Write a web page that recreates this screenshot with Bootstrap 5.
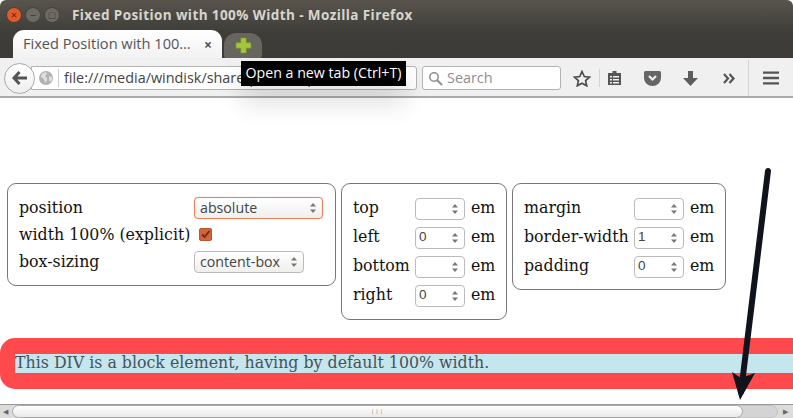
<!DOCTYPE html>
<html lang="en">
<head>
<meta charset="utf-8">
<title>Fixed Position with 100% Width</title>
<link href="https://cdn.jsdelivr.net/npm/bootstrap@5.3.0/dist/css/bootstrap.min.css" rel="stylesheet">
<style>
html,body{margin:0;width:793px;height:418px;overflow:hidden;background:#fff}
.shell{width:793px;height:418px;position:relative;overflow:hidden;font-family:"Open Sans","Noto Sans",sans-serif}
.titlebar{height:58px;background:linear-gradient(#59554d,#3e3d39 55%,#3c3b37);border-radius:6px 6px 0 0}
.winbar{height:30px;padding-left:6px;gap:3px}
.winbtn{width:16px;height:16px;border-radius:50%;background:#6d6a63;border:1px solid #44423d;color:#37352f;font-size:11px;line-height:13px;text-align:center}
.winbtn.closer{background:#e2592b;color:#5a2410}
.wintitle{color:#d8d5cd;font-size:13.5px;font-weight:700;margin-left:9px;white-space:nowrap;letter-spacing:.41px}
.tabrow{height:28px;padding-left:13px;align-items:flex-end}
.tabon{width:209px;height:28px;background:linear-gradient(#fff,#f2f2f2);border-radius:11px 11px 0 0;padding:0 10px;color:#555;font-size:14.6px;white-space:nowrap}
.tabx{color:#555;font-size:14px;font-weight:700;margin-left:auto;margin-right:0}
.tabnew{width:38px;height:25px;margin-left:2px;background:#66665f;border-radius:12px 12px 2px 2px}
.toolbar{height:40px;background:#f0f0f0;border-bottom:2px solid #aaa;padding:2px 0 0 4px;position:relative}
.backbtn{width:31px;height:31px;border-radius:50%;background:linear-gradient(#fff,#eee);border:1px solid #a9a9a9;position:relative;z-index:1;flex:none}
.urlbar{width:386px;height:24px;margin-left:-4px;background:#fff;border:1px solid #b3b3b3;border-radius:0 3px 3px 0;padding-left:7px;font-size:14.4px;color:#444;white-space:nowrap;overflow:hidden;flex:none}
.urlbar svg{flex:none}
.urlsep{width:1px;height:18px;background:#ccc;margin:0 5px 0 5px;flex:none}
.searchbar{width:139px;height:24px;margin-left:5px;background:#fff;border:1px solid #b3b3b3;border-radius:3px;padding-left:5px;color:#8e8e8e;font-size:14.4px;flex:none}
.toolicons{margin-left:12px;height:38px}
.iconslot{flex:none}
.tsep{width:1px;background:#d4d4d4;flex:none}
.sepone{height:18px;margin:0 7px 0 8px}
.septwo{height:36px;margin-left:12px}
.mpocket{margin-left:22px}
.mdown{margin-left:22px}
.mmore{margin-left:25px}
.mburger{margin-left:14px}
.pagebody{height:306px;background:#fff;font-family:"DejaVu Serif","Liberation Serif",serif;font-size:15.8px;color:#111}
.panels{padding:85px 0 0 7px;gap:5px;height:240px;align-items:flex-start}
.boxa{border:1px solid #777;border-radius:9px;background:#fff;padding:10px 11px 0 11px}
.boxone{width:329px;height:103px;padding-top:11px}
.boxtwo{width:166px;height:137px}
.boxthree{width:214px;height:107px}
.boxtwo .flabel,.boxtwo .unitlbl,.boxthree .flabel,.boxthree .unitlbl{padding-bottom:2px}
.frow{height:29px;white-space:nowrap}
.frow.lead-row{height:26px}
.frow.tight{height:27px}
.flabel{flex:none}
.wtwo{width:62px}.wthree{width:110px}.wone{width:175px}
.fakesel{height:22px;border:1px solid #bbb;border-radius:4px;background:linear-gradient(#fff,#f0efee);font-family:"Open Sans","Noto Sans",sans-serif;font-size:14.2px;color:#444;padding:0 5px}
.fakesel.hot{width:129px;border-color:#e8805a;box-shadow:0 0 1px #f0a080}
.fakesel.plain{width:110px}
.spin{margin-left:auto;width:8px;height:14px;flex:none}
.spin path{fill:#777}
.numbox{width:50px;height:22px;border:1px solid #bbb;border-radius:4px;background:#fff;font-family:"Liberation Sans",sans-serif;font-size:13.5px;color:#444;padding:0 5px 0 3px;flex:none}
.unitlbl{margin-left:6px}
.checkit{width:13px;height:13px;background:#d0643c;border:1px solid #b9542f;border-radius:2px;margin-left:9px;flex:none}
.redband{height:51px;background:#ff4a4d;border-radius:15px 0 0 15px;padding:16px 0 0 15px;width:793px}
.blueband{height:19px;background:#c5e6ec;color:#45525a;line-height:18px;white-space:nowrap}
.hscroll{position:absolute;left:0;right:0;top:404px;height:14px;background:#dcdcdc;border-top:1px solid #999}
.hthumb{position:absolute;left:12px;top:0;width:731px;height:13px;background:linear-gradient(#fff,#e9e9e9);border:1px solid #aaa;border-radius:7px}
.hgrip{font-size:6px;color:#888;line-height:10px;text-align:center;letter-spacing:1px}
.htrack{position:absolute;left:733px;top:0;width:45px;height:13px;border:1px solid #c4c4c4;border-left:0;border-radius:0 7px 7px 0;background:#d4d4d4}
.harrow{position:absolute;top:2px;color:#666;font-size:7px;line-height:9px}
.tipbox{position:absolute;left:241px;top:61px;width:165px;height:25px;background:#000;color:#fff;font-size:14.2px;line-height:24px;text-align:center;white-space:nowrap;z-index:5;box-shadow:0 16px 26px rgba(0,0,0,.14)}
.bigarrow{position:absolute;left:0;top:0;z-index:6;pointer-events:none}
</style>
</head>
<body>
<div class="shell">
  <div class="titlebar">
    <div class="winbar d-flex align-items-center">
      <span class="winbtn closer">×</span><span class="winbtn">−</span><span class="winbtn">□</span>
      <span class="wintitle">Fixed Position with 100% Width - Mozilla Firefox</span>
    </div>
    <div class="tabrow d-flex">
      <div class="tabon d-flex align-items-center"><span>Fixed Position with 100…</span><span class="tabx">×</span></div>
      <div class="tabnew d-flex align-items-center justify-content-center">
        <svg width="17" height="17" viewBox="0 0 16 16"><path d="M5.500 1h5v4.500H15v5h-4.500V15h-5v-4.500H1v-5h4.500z" fill="#a5c63b" stroke="#7e9a2a" stroke-width=".6"/></svg>
      </div>
    </div>
  </div>
  <div class="toolbar d-flex align-items-center">
    <div class="backbtn d-flex align-items-center justify-content-center">
      <svg width="16" height="14" viewBox="0 0 16 14"><path d="M7.500 1 2 7l5.500 6M2.500 7H15" fill="none" stroke="#555" stroke-width="3"/></svg>
    </div>
    <div class="urlbar d-flex align-items-center">
      <svg width="14" height="14" viewBox="0 0 14 14"><circle cx="7" cy="7" r="7" fill="#b2b2b2"/><path d="M3 2.500 7 1l1 2-2 2 2 2v3l-2 2-1-4-3-2zM10 5l3 1v3l-2 2-1-2z" fill="#dedede"/></svg>
      <span class="urlsep"></span>
      <span>file:///media/windisk/share/pub/css/position.html</span>
    </div>
    <div class="searchbar d-flex align-items-center gap-1">
      <svg width="15" height="15" viewBox="0 0 15 15"><circle cx="6" cy="6" r="4.200" fill="none" stroke="#8e8e8e" stroke-width="1.600"/><path d="m9 9 5 5" stroke="#8e8e8e" stroke-width="2"/></svg>
      <span>Search</span>
    </div>
    <div class="toolicons d-flex align-items-center">
      <svg class="iconslot" width="18" height="17" viewBox="0 0 18 17"><path d="m9 1.500 2.300 5 5.200.6-3.900 3.500 1.100 5.200L9 13.200l-4.700 2.600 1.100-5.200L1.500 7.100l5.200-.6z" fill="none" stroke="#4d4d4d" stroke-width="1.700"/></svg>
      <span class="tsep sepone"></span>
      <svg class="iconslot" width="15" height="16" viewBox="0 0 15 16"><path d="M1 3h4.500V1h4v2H14v12H1z" fill="#555"/><path d="M3 6h2v1.500H3zM6 6h6v1.500H6zM3 9h2v1.500H3zM6 9h6v1.500H6zM3 12h2v1.500H3zM6 12h6v1.500H6z" fill="#f0f0f0"/></svg>
      <svg class="iconslot mpocket" width="17" height="15" viewBox="0 0 17 15"><path d="M1.500 0h14A1.500 1.500 0 0 1 17 1.500V7a8.500 8 0 0 1-17 0V1.500A1.500 1.500 0 0 1 1.500 0z" fill="#666"/><path d="m5 5 3.500 3.500L12 5" fill="none" stroke="#f0f0f0" stroke-width="2.200"/></svg>
      <svg class="iconslot mdown" width="15" height="15" viewBox="0 0 15 15"><path d="M5 0h5v7h5l-7.500 8L0 7h5z" fill="#5d5d5d"/></svg>
      <svg class="iconslot mmore" width="13" height="11" viewBox="0 0 13 11"><path d="m1 1 4 4.500L1 10M6.500 1l4 4.500-4 4.500" fill="none" stroke="#555" stroke-width="2.200"/></svg>
      <span class="tsep septwo"></span>
      <svg class="iconslot mburger" width="16" height="14" viewBox="0 0 17 14"><path d="M0 0h17v2.500H0zM0 5.700h17v2.500H0zM0 11.500h17V14H0z" fill="#555"/></svg>
    </div>
  </div>
  <div class="pagebody">
    <div class="panels d-flex">
      <div class="boxa boxone">
        <div class="frow lead-row d-flex align-items-center"><span class="flabel wone">position</span>
          <div class="fakesel hot d-flex align-items-center"><span>absolute</span><svg class="spin" viewBox="0 0 8 14"><path d="M1 5.500 4 2l3 3.500zM1 8.500h6L4 12z"/></svg></div></div>
        <div class="frow tight d-flex align-items-center"><span class="flabel">width 100% (explicit)</span>
          <span class="checkit d-flex align-items-center justify-content-center"><svg width="11" height="11" viewBox="0 0 11 11"><path d="m2 5.500 2.500 2.500L9.500 2" fill="none" stroke="#6b2c12" stroke-width="1.800"/></svg></span></div>
        <div class="frow tight d-flex align-items-center"><span class="flabel wone">box-sizing</span>
          <div class="fakesel plain d-flex align-items-center"><span>content-box</span><svg class="spin" viewBox="0 0 8 14"><path d="M1 5.500 4 2l3 3.500zM1 8.500h6L4 12z"/></svg></div></div>
      </div>
      <div class="boxa boxtwo">
        <div class="frow d-flex align-items-center"><span class="flabel wtwo">top</span><div class="numbox d-flex align-items-center"><svg class="spin" viewBox="0 0 8 14"><path d="M1 5.500 4 2l3 3.500zM1 8.500h6L4 12z"/></svg></div><span class="unitlbl">em</span></div>
        <div class="frow d-flex align-items-center"><span class="flabel wtwo">left</span><div class="numbox d-flex align-items-center"><span>0</span><svg class="spin" viewBox="0 0 8 14"><path d="M1 5.500 4 2l3 3.500zM1 8.500h6L4 12z"/></svg></div><span class="unitlbl">em</span></div>
        <div class="frow d-flex align-items-center"><span class="flabel wtwo">bottom</span><div class="numbox d-flex align-items-center"><svg class="spin" viewBox="0 0 8 14"><path d="M1 5.500 4 2l3 3.500zM1 8.500h6L4 12z"/></svg></div><span class="unitlbl">em</span></div>
        <div class="frow d-flex align-items-center"><span class="flabel wtwo">right</span><div class="numbox d-flex align-items-center"><span>0</span><svg class="spin" viewBox="0 0 8 14"><path d="M1 5.500 4 2l3 3.500zM1 8.500h6L4 12z"/></svg></div><span class="unitlbl">em</span></div>
      </div>
      <div class="boxa boxthree">
        <div class="frow d-flex align-items-center"><span class="flabel wthree">margin</span><div class="numbox d-flex align-items-center"><svg class="spin" viewBox="0 0 8 14"><path d="M1 5.500 4 2l3 3.500zM1 8.500h6L4 12z"/></svg></div><span class="unitlbl">em</span></div>
        <div class="frow d-flex align-items-center"><span class="flabel wthree">border-width</span><div class="numbox d-flex align-items-center"><span>1</span><svg class="spin" viewBox="0 0 8 14"><path d="M1 5.500 4 2l3 3.500zM1 8.500h6L4 12z"/></svg></div><span class="unitlbl">em</span></div>
        <div class="frow d-flex align-items-center"><span class="flabel wthree">padding</span><div class="numbox d-flex align-items-center"><span>0</span><svg class="spin" viewBox="0 0 8 14"><path d="M1 5.500 4 2l3 3.500zM1 8.500h6L4 12z"/></svg></div><span class="unitlbl">em</span></div>
      </div>
    </div>
    <div class="redband"><div class="blueband">This DIV is a block element, having by default 100% width.</div></div>
  </div>
  <div class="hscroll">
    <span class="harrow" style="left:3px">◀</span>
    <div class="htrack"></div>
    <div class="hthumb"><div class="hgrip">|||</div></div>
    <span class="harrow" style="left:783px">▶</span>
  </div>
  <div class="tipbox">Open a new tab (Ctrl+T)</div>
  <svg class="bigarrow" width="793" height="418" viewBox="0 0 793 418"><path d="M768 171 741 392" stroke="#10131c" stroke-width="6" stroke-linecap="round" fill="none"/><path d="M732 372 741 378 755 373 740 400z" fill="#10131c"/></svg>
</div>
<script src="https://cdn.jsdelivr.net/npm/bootstrap@5.3.0/dist/js/bootstrap.bundle.min.js"></script>
</body>
</html>
